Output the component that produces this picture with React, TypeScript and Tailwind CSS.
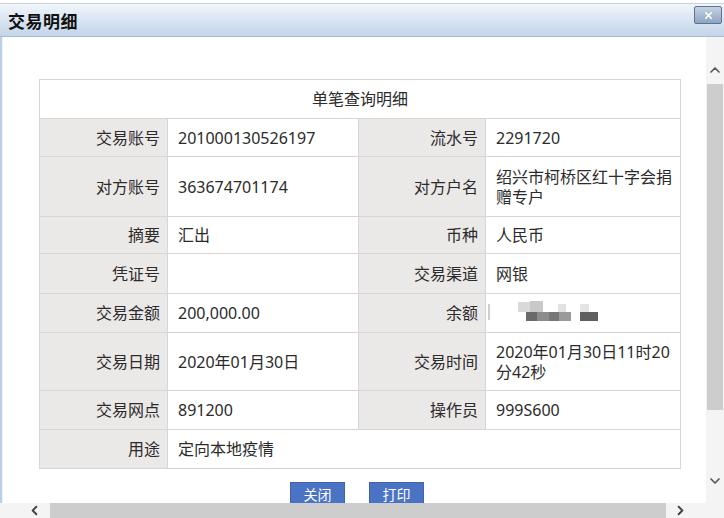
import { ChevronUp, ChevronDown, ChevronLeft, ChevronRight, X } from "lucide-react";

type Row = {
    h: string;
    l1: string;
    v1: React.ReactNode;
    l2?: string;
    v2?: React.ReactNode;
};

// pixelated / blurred balance value
const Masked = () => (
    <div className="relative h-[24px] w-[110px]">
        <div className="absolute left-[-8px] top-[3px] h-[16px] w-[2px] bg-[#cfcfcf]" />
        <div className="absolute left-[22px] top-[1px] h-[10px] w-[12px] bg-[#d9d9d9]" />
        <div className="absolute left-[34px] top-[0px] h-[11px] w-[13px] bg-[#c9c9c9]" />
        <div className="absolute left-[62px] top-[3px] h-[8px] w-[8px] bg-[#e2e2e2]" />
        <div className="absolute left-[84px] top-[3px] h-[8px] w-[9px] bg-[#e4e4e4]" />
        <div className="absolute left-[30px] top-[11px] h-[9px] w-[11px] bg-[#6a6a6a]" />
        <div className="absolute left-[41px] top-[11px] h-[9px] w-[12px] bg-[#8c8c8c]" />
        <div className="absolute left-[53px] top-[11px] h-[9px] w-[10px] bg-[#777]" />
        <div className="absolute left-[63px] top-[11px] h-[9px] w-[12px] bg-[#9a9a9a]" />
        <div className="absolute left-[84px] top-[11px] h-[9px] w-[18px] bg-[#5f5f5f]" />
    </div>
);

const rows: Row[] = [
    { h: "h-[38px]", l1: "交易账号", v1: "201000130526197", l2: "流水号", v2: "2291720" },
    {
        h: "h-[60px]",
        l1: "对方账号",
        v1: "363674701174",
        l2: "对方户名",
        v2: (
            <>
                绍兴市柯桥区红十字会捐
                <br />
                赠专户
            </>
        ),
    },
    { h: "h-[37px]", l1: "摘要", v1: "汇出", l2: "币种", v2: "人民币" },
    { h: "h-[40px]", l1: "凭证号", v1: "", l2: "交易渠道", v2: "网银" },
    { h: "h-[39px]", l1: "交易金额", v1: "200,000.00", l2: "余额", v2: <Masked /> },
    {
        h: "h-[58px]",
        l1: "交易日期",
        v1: "2020年01月30日",
        l2: "交易时间",
        v2: (
            <>
                2020年01月30日11时20
                <br />
                分42秒
            </>
        ),
    },
    { h: "h-[39px]", l1: "交易网点", v1: "891200", l2: "操作员", v2: "999S600" },
    { h: "h-[39px]", l1: "用途", v1: "定向本地疫情" },
];

const label = "bg-[#ebe8e8] border border-[#d6d6d6] text-right pr-[7px] align-middle";
const value = "bg-white border border-[#d6d6d6] pl-[10px] pr-[4px] align-middle";

export default function App() {
    return (
        <div
            className="w-[724px] h-[518px] overflow-hidden bg-white flex flex-col text-[#2b2b2b]"
            style={{ fontFamily: '"Noto Sans", "Noto Sans CJK SC", sans-serif' }}
        >
            {/* Title bar */}
            <div className="h-[37px] pt-[3px] bg-white shrink-0">
                <div className="h-full flex items-center justify-between pl-[8px] pr-[2px] border-t border-[#c9d1da] border-b border-b-[#a9bcd2] bg-gradient-to-b from-[#f2f6fb] via-[#d9e5f2] to-[#c3d5ea]">
                    <span
                        className="text-[17px] font-bold text-[#111] leading-none tracking-[0.5px]"
                        style={{ fontFamily: '"Noto Sans CJK SC", sans-serif' }}
                    >
                        交易明细
                    </span>
                    <div className="w-[28px] h-[18px] mb-[10px] flex items-center justify-center rounded-[2px] border border-[#5d7593] bg-gradient-to-b from-[#c6d3e3] to-[#8ea4c0]">
                        <X className="w-[11px] h-[11px] text-white" strokeWidth={3.5} />
                    </div>
                </div>
            </div>

            {/* Body */}
            <div className="flex flex-1 min-h-0">
                <div className="w-[3px] shrink-0 border-l-[2px] border-[#b9cfe6] bg-[#eef4fa]" />
                <div className="flex-1 min-w-0 overflow-hidden pl-[36px] pt-[42px]">
                    <table className="border-collapse table-fixed w-[641px] text-[16px] leading-[20px] border border-[#cfcfcf]">
                        <colgroup>
                            <col className="w-[128px]" />
                            <col className="w-[191px]" />
                            <col className="w-[127px]" />
                            <col className="w-[195px]" />
                        </colgroup>
                        <tbody>
                            <tr className="h-[39px]">
                                <td colSpan={4} className="border border-[#d6d6d6] text-center align-middle">
                                    单笔查询明细
                                </td>
                            </tr>
                            {rows.map((r) => (
                                <tr key={r.l1} className={r.h}>
                                    <td className={label}>{r.l1}</td>
                                    {r.l2 ? (
                                        <>
                                            <td className={value}>{r.v1}</td>
                                            <td className={label}>{r.l2}</td>
                                            <td className={value}>{r.v2}</td>
                                        </>
                                    ) : (
                                        <td colSpan={3} className={value}>
                                            {r.v1}
                                        </td>
                                    )}
                                </tr>
                            ))}
                        </tbody>
                    </table>

                    <div className="flex gap-[24px] pl-[251px] pt-[13px]">
                        <button className="w-[55px] h-[24px] bg-[#4b73c3] text-white text-[14px] leading-[24px] border border-[#3f63ad]">
                            关闭
                        </button>
                        <button className="w-[55px] h-[24px] bg-[#4b73c3] text-white text-[14px] leading-[24px] border border-[#3f63ad]">
                            打印
                        </button>
                    </div>
                </div>

                {/* Vertical scrollbar */}
                <div className="w-[18px] shrink-0 flex flex-col pt-[3px] bg-[#f4f4f4]">
                    <div className="h-[44px] flex items-end justify-center pb-[6px]">
                        <ChevronUp className="w-[16px] h-[16px] text-[#555]" strokeWidth={2.5} />
                    </div>
                    <div className="h-[326px] bg-[#cdcdcd] mx-[1px]" />
                    <div className="flex-1 flex items-end justify-center pb-[14px]">
                        <ChevronDown className="w-[16px] h-[16px] text-[#555]" strokeWidth={2.5} />
                    </div>
                </div>
            </div>

            {/* Horizontal scrollbar */}
            <div className="h-[15px] shrink-0 flex items-center bg-[#f4f4f4]">
                <div className="w-[50px] flex justify-end pr-[8px]">
                    <ChevronLeft className="w-[15px] h-[15px] text-[#444]" strokeWidth={3} />
                </div>
                <div className="w-[616px] h-full bg-[#cdcdcd]" />
                <div className="w-[28px] flex justify-center">
                    <ChevronRight className="w-[15px] h-[15px] text-[#444]" strokeWidth={3} />
                </div>
            </div>
        </div>
    );
}
